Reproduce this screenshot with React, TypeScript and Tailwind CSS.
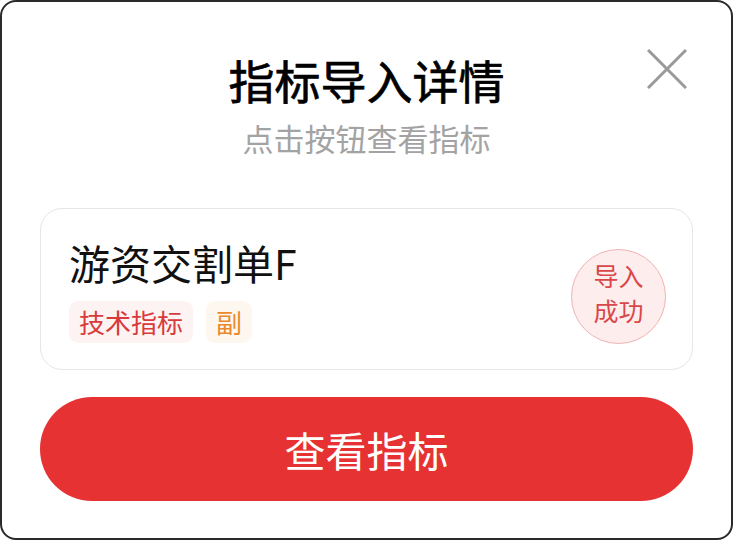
import React from 'react';

const tags = [
  { label: '技术指标', className: 'bg-[#fdf3f2] text-[#d93a3a] px-[10px]' },
  { label: '副', className: 'bg-[#fef7ef] text-[#ea8a2c] px-[10px]' },
];

export default function App() {
  return (
    <div className="w-[733px] h-[541px] bg-white font-['Noto_Sans_CJK_SC','Noto_Sans',sans-serif]">
      <div className="relative w-[733px] h-[540px] rounded-[16px] border-2 border-[#2a2a2a] bg-white px-[38px] pt-[54px] flex flex-col">
        {/* Close */}
        <button className="absolute right-[44px] top-[47px] w-[40px] h-[40px]">
          <svg viewBox="0 0 40 40" className="w-full h-full" fill="none" stroke="#9a9a9a" strokeWidth="3">
            <path d="M1 1 L39 39 M39 1 L1 39" />
          </svg>
        </button>

        {/* Header */}
        <div className="text-center">
          <h1 className="text-[46px] leading-none font-normal text-black [-webkit-text-stroke:0.7px_black]">指标导入详情</h1>
          <p className="mt-[20px] text-[31px] leading-none text-[#a3a3a3]">点击按钮查看指标</p>
        </div>

        {/* Indicator card */}
        <div className="mt-[55px] h-[162px] rounded-[22px] border border-[#e6e6e6] pl-[28px] pr-[26px] pt-[33px] flex items-start justify-between">
          <div className="flex flex-col">
            <div className="text-[41px] leading-none text-[#111]">游资交割单F</div>
            <div className="mt-[18px] flex gap-[13px]">
              {tags.map((t) => (
                <span
                  key={t.label}
                  className={`h-[42px] rounded-[9px] text-[26px] leading-[42px] ${t.className}`}
                >
                  {t.label}
                </span>
              ))}
            </div>
          </div>
          <div className="mt-[7px] w-[95px] h-[95px] pb-[8px] rounded-full border border-[#f0b3b3] bg-[#fdeded] flex flex-col items-center justify-center text-[25px] leading-[35px] text-[#d9474a]">
            <span>导入</span>
            <span>成功</span>
          </div>
        </div>

        {/* Action */}
        <button className="mt-[27px] h-[104px] w-full rounded-full bg-[#e63232] text-white text-[41px] leading-none">
          查看指标
        </button>
      </div>
    </div>
  );
}
